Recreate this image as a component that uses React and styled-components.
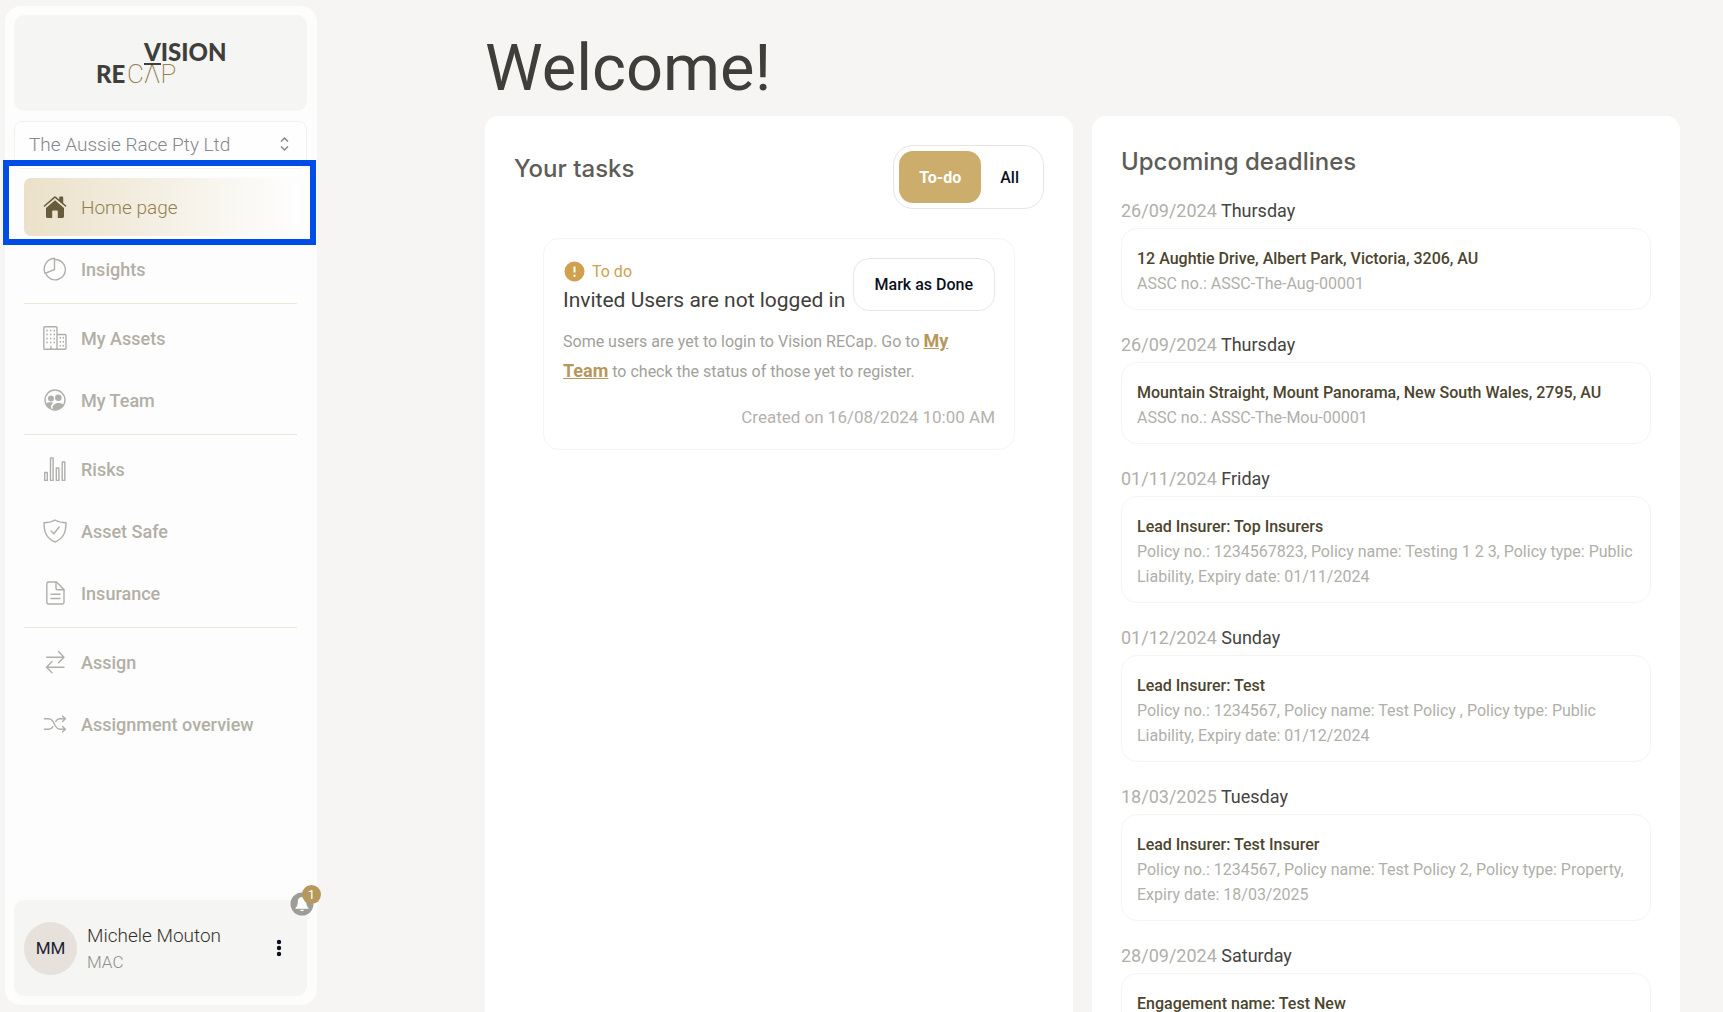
import React, { useState } from 'react';
import styled, { createGlobalStyle } from 'styled-components';

const GlobalStyle = createGlobalStyle`
  *, *::before, *::after {
    box-sizing: border-box;
  }
  body {
    margin: 0;
    background: #f6f5f3;
    color: #3f3e3b;
    font-family: Roboto, 'Liberation Sans', sans-serif;
  }
  h1, h2, h3, p {
    margin: 0;
  }
  button, select {
    font-family: inherit;
  }
`;

const Shell = styled.div`
  display: flex;
  height: 100vh;
  overflow: hidden;
`;

const Sidebar = styled.aside`
  display: flex;
  flex-direction: column;
  flex: none;
  width: 312px;
  height: calc(100vh - 13px);
  margin: 6px 0 0 5px;
  padding: 9px;
  padding-right: 10px;
  border-radius: 16px;
  background: #fdfdfd;
`;

const LogoBox = styled.div`
  display: flex;
  flex: none;
  justify-content: center;
  height: 96px;
  border-radius: 10px;
  background: #f5f5f3;
`;

const OrgPicker = styled.label`
  display: flex;
  flex: none;
  align-items: center;
  height: 48px;
  margin-top: 10px;
  padding: 0 15px 2px 14px;
  border: 1px solid #f3f2f0;
  border-radius: 8px;
  background: #fefefe;
  color: #85868e;
  select {
    appearance: none;
    flex: 1;
    min-width: 0;
    padding: 0;
    border: 0;
    outline: 0;
    background: none;
    color: inherit;
    font-size: 19px;
    font-weight: 300;
  }
`;

const Nav = styled.nav`
  display: flex;
  flex-direction: column;
  gap: 4px;
  margin-top: 9px;
  padding: 0 10px;
`;

const NavLink = styled.a`
  position: relative;
  display: flex;
  align-items: center;
  gap: 14px;
  height: 58px;
  padding-left: 19px;
  border-radius: 7px;
  background: ${(props) =>
    props.$active
      ? 'linear-gradient(90deg, #ebe1ca 0%, #f3eee1 45%, #fefefe 100%)'
      : 'none'};
  color: ${(props) => (props.$active ? '#91804f' : '#b2afa5')};
  font-size: ${(props) => (props.$active ? '19px' : '18px')};
  font-weight: ${(props) => (props.$active ? 300 : 500)};
  text-decoration: none;
  svg {
    flex: none;
    color: ${(props) => (props.$active ? '#685c3b' : '#b0afa9')};
  }
`;

const Highlight = styled.span`
  position: absolute;
  inset: -18px -19px -9px -21px;
  border: 6px solid #004ce6;
  pointer-events: none;
`;

const Divider = styled.hr`
  width: 100%;
  height: 1px;
  margin: 1px 0;
  border: 0;
  background: #eee6d2;
`;

const Profile = styled.div`
  position: relative;
  display: flex;
  flex: none;
  align-items: center;
  gap: 10px;
  height: 96px;
  margin-top: auto;
  padding: 0 10px;
  border-radius: 10px;
  background: #f5f5f3;
`;

const Avatar = styled.div`
  display: flex;
  flex: none;
  align-items: center;
  justify-content: center;
  width: 53px;
  height: 53px;
  border-radius: 50%;
  background: #e6e2db;
  color: #1d2233;
  font-size: 17px;
`;

const ProfileText = styled.div`
  flex: 1;
  padding-top: 2px;
  font-size: 19px;
  font-weight: 300;
  line-height: 27px;
  color: #35332a;
  p + p {
    color: #8f8f89;
    font-size: 17px;
  }
`;

const IconButton = styled.button`
  display: flex;
  padding: 8px;
  border: 0;
  background: none;
  color: #0b1020;
`;

const Bell = styled.button`
  position: absolute;
  top: -8px;
  right: -7px;
  display: flex;
  padding: 0;
  border: 0;
  background: none;
`;

const Badge = styled.span`
  position: absolute;
  top: -7px;
  right: -7px;
  width: 19px;
  height: 19px;
  border-radius: 50%;
  background: #b6975c;
  color: #fff;
  font-size: 13px;
  line-height: 19px;
  text-align: center;
`;

const Main = styled.main`
  flex: 1;
  min-width: 0;
  padding: 28px 43px 0 168px;
  overflow-y: auto;
  scrollbar-width: none;
`;

const Title = styled.h1`
  font-size: 65px;
  font-weight: 400;
  line-height: 80px;
  color: #3f3e3b;
`;

const Columns = styled.div`
  display: grid;
  grid-template-columns: 1fr 1fr;
  gap: 19px;
  margin-top: 8px;
`;

const Panel = styled.section`
  padding: 29px;
  border-radius: 14px;
  background: #fff;
`;

const PanelTitle = styled.h2`
  font-family: Inter, Roboto, sans-serif;
  font-size: 24px;
  font-weight: 500;
  line-height: 34px;
  color: #5d5c57;
`;

const PanelHeader = styled.div`
  display: flex;
  justify-content: space-between;
  margin-bottom: 29px;
  ${PanelTitle} {
    padding-top: 7px;
  }
`;

const Toggle = styled.div`
  display: flex;
  height: 64px;
  padding: 5px;
  border: 1px solid #e6e5e1;
  border-radius: 20px;
`;

const ToggleButton = styled.button`
  padding: 0 19px;
  border: 0;
  border-radius: 14px;
  background: ${(props) => (props.$on ? '#ccad6b' : 'none')};
  color: ${(props) => (props.$on ? '#fff' : '#0b1020')};
  font-size: 16px;
  font-weight: ${(props) => (props.$on ? 700 : 500)};
  &:first-child {
    min-width: 82px;
  }
`;

const TaskCard = styled.article`
  margin: 0 29px;
  padding: 19px;
  border: 1px solid #f4f4f3;
  border-radius: 16px;
`;

const TaskHeader = styled.div`
  display: flex;
  justify-content: space-between;
`;

const Status = styled.div`
  display: flex;
  align-items: center;
  gap: 7px;
  margin-bottom: 1px;
  color: #d0a04e;
  font-size: 16px;
  line-height: 27px;
  padding-left: 1px;
`;

const TaskTitle = styled.h3`
  font-size: 21px;
  font-weight: 400;
  line-height: 28px;
  white-space: nowrap;
  color: #3f3e3b;
`;

const DoneButton = styled.button`
  flex: none;
  height: 53px;
  padding: 0 21px;
  border: 1px solid #e2e8f0;
  border-radius: 16px;
  background: #fff;
  color: #0b1020;
  font-size: 16px;
  font-weight: 500;
`;

const TaskText = styled.p`
  margin-top: 12px;
  padding-right: 20px;
  color: #a2a19b;
  font-size: 16px;
  line-height: 29px;
  a {
    color: #b6975c;
    font-size: 18px;
    font-weight: 700;
  }
`;

const Created = styled.p`
  margin-top: 19px;
  color: #b3b2ad;
  font-size: 17px;
  line-height: 25px;
  text-align: right;
`;

const Deadline = styled.article`
  margin-top: 22px;
  ${PanelTitle} + & {
    margin-top: 19px;
  }
`;

const DeadlineDate = styled.h3`
  font-size: 18px;
  font-weight: 400;
  line-height: 25px;
  color: #45443f;
  time {
    color: #b0afa9;
  }
`;

const DeadlineCard = styled.div`
  margin-top: 5px;
  padding: 17px 15px 13px;
  border: 1px solid #f4f4f3;
  border-radius: 16px;
  color: #b0afa9;
  font-size: 16px;
  line-height: 25px;
  strong {
    display: block;
    color: #4c452e;
    font-weight: 500;
  }
`;

function Logo() {
  return (
    <svg width="130" height="96" viewBox="0 0 130 96" role="img" aria-label="Vision RECap">
      <g fontFamily="Lato, sans-serif" fontSize="24">
        <text x="48" y="46" fontWeight="900" fill="#3f3e3b">VISION</text>
        <text x="0" y="68" fontWeight="900" fill="#3f3e3b">RE</text>
        <text x="31" y="68" fontFamily="Roboto, sans-serif" fontSize="26" fontWeight="200" fill="#91804f">
          CΛP
        </text>
      </g>
      <rect x="48" y="48" width="17" height="2" fill="#3f3e3b" />
    </svg>
  );
}

function Icon({ children, size = 24 }) {
  return (
    <svg
      width={size}
      height={size}
      viewBox="0 0 24 24"
      fill="none"
      stroke="currentColor"
      strokeWidth="1.4"
      strokeLinecap="round"
      strokeLinejoin="round"
      aria-hidden="true"
    >
      {children}
    </svg>
  );
}

const icons = {
  home: (
    <g fill="currentColor" stroke="none">
      <path d="M12 5.2 21 13v8.6c0 .8-.6 1.4-1.4 1.4h-4.8v-6.6c0-.5-.3-.8-.8-.8h-4c-.5 0-.8.3-.8.8V23H4.4c-.8 0-1.4-.6-1.4-1.4V13z" />
      <path d="M11 1.7a1.5 1.5 0 0 1 2 0l3.2 2.8V2.3c0-.5.3-.8.8-.8h2.4c.5 0 .8.3.8.8v5.7l3 2.6c.4.4.1 1-.3 1.1-.3.1-.6 0-.8-.2L12 2.9l-10.1 8.6c-.3.3-.8.2-1-.1-.3-.3-.2-.7.1-1z" />
    </g>
  ),
  insights: (
    <>
      <path d="M11.5 1.2v11.3L2 16.3A11 11 0 0 1 11.5 1.2z" />
      <path d="M11.5 2.5a10.2 10.2 0 1 1-8.8 14" />
    </>
  ),
  assets: (
    <>
      <path d="M2 .8h11c.6 0 1 .4 1 1V23.3H1.8a1 1 0 0 1-1-1V1.8c0-.6.5-1 1.2-1zM14 8.5h8c.6 0 1 .4 1 1v12.8a1 1 0 0 1-1 1h-8M8 20.5v2.8" />
      <path
        d="M4 4.2v16M7.7 4.2v14M11.3 4.2v16M17.3 11.5v9M20.3 11.5v9"
        strokeDasharray="0.5 3.5"
        strokeWidth="1.5"
      />
    </>
  ),
  team: (
    <>
      <circle cx="12" cy="12" r="10" />
      <g fill="currentColor" stroke="none">
        <circle cx="8" cy="10.5" r="3" />
        <circle cx="15.3" cy="9.7" r="3.3" />
        <path d="M3 15.5c2-1.3 5-1.6 7.3-.8-1.5 1.1-2.3 2.5-2.3 4.3v2C5.5 20.2 3.6 18 3 15.5zM9.6 19.5c0-3 3.3-4.5 5.9-4.5 2 0 4.2.6 5.3 1.5-1.6 3.7-5.6 6-9.8 5.3l-1.4-.3z" />
      </g>
    </>
  ),
  risks: (
    <path d="M1.7 15.5h2.6v8H1.7zM7.5 1h2.6v22.5H7.5zM13.3 11h2.6v12.5h-2.6zM19.2 5h2.6v18.5h-2.6z" />
  ),
  safe: (
    <>
      <path d="M12 1c3.3 2 7 2.7 11 2.7 0 9-2 15.3-11 19.3C3 19 1 12.7 1 3.7 5 3.7 8.7 3 12 1z" />
      <path d="m8 12 2.8 2.8L16.2 8" />
    </>
  ),
  insurance: (
    <>
      <path d="M5.5 1h8l7.5 7.5v12.8c0 1-.7 1.7-1.7 1.7H5.5c-1 0-1.7-.7-1.7-1.7V2.7c0-1 .7-1.7 1.7-1.7z" />
      <path d="M13 1.2v6c0 .8.5 1.5 1.5 1.5h6.3M8 13.2h9M8 17.5h9" />
    </>
  ),
  assign: <path d="M3.5 7.2h17.3M15.5 1.5l5.5 5.7-5.5 5.6M21 17.2H3.6M9 11.5l-5.5 5.7L9 22.8" />,
  overview: (
    <path d="M1.5 6.7h4.2c2 0 3.2 1 4.2 2.6l2.8 5.2c1 1.7 2.2 2.7 4.2 2.7h5.5M1.5 17.2h4.2c2 0 3.2-.9 4.2-2.6M12.7 9.3c1-1.7 2.2-2.6 4.2-2.6h5.5M19.5 4l2.9 2.7-2.9 2.7M19.5 14.5l2.9 2.7-2.9 2.7" />
  ),
};

const navGroups = [
  [
    { label: 'Home page', icon: 'home', active: true },
    { label: 'Insights', icon: 'insights' },
  ],
  [
    { label: 'My Assets', icon: 'assets' },
    { label: 'My Team', icon: 'team' },
  ],
  [
    { label: 'Risks', icon: 'risks' },
    { label: 'Asset Safe', icon: 'safe' },
    { label: 'Insurance', icon: 'insurance' },
  ],
  [
    { label: 'Assign', icon: 'assign' },
    { label: 'Assignment overview', icon: 'overview' },
  ],
];

const deadlines = [
  {
    date: '26/09/2024',
    day: 'Thursday',
    title: '12 Aughtie Drive, Albert Park, Victoria, 3206, AU',
    detail: 'ASSC no.: ASSC-The-Aug-00001',
  },
  {
    date: '26/09/2024',
    day: 'Thursday',
    title: 'Mountain Straight, Mount Panorama, New South Wales, 2795, AU',
    detail: 'ASSC no.: ASSC-The-Mou-00001',
  },
  {
    date: '01/11/2024',
    day: 'Friday',
    title: 'Lead Insurer: Top Insurers',
    detail:
      'Policy no.: 1234567823, Policy name: Testing 1 2 3, Policy type: Public Liability, Expiry date: 01/11/2024',
  },
  {
    date: '01/12/2024',
    day: 'Sunday',
    title: 'Lead Insurer: Test',
    detail:
      'Policy no.: 1234567, Policy name: Test Policy , Policy type: Public Liability, Expiry date: 01/12/2024',
  },
  {
    date: '18/03/2025',
    day: 'Tuesday',
    title: 'Lead Insurer: Test Insurer',
    detail:
      'Policy no.: 1234567, Policy name: Test Policy 2, Policy type: Property, Expiry date: 18/03/2025',
  },
  {
    date: '28/09/2024',
    day: 'Saturday',
    title: 'Engagement name: Test New',
  },
];

function SideNav() {
  return (
    <Nav>
      {navGroups.map((group, index) => (
        <React.Fragment key={index}>
          {index > 0 && <Divider />}
          {group.map((item) => (
            <NavLink key={item.label} href="#" $active={item.active}>
              <Icon>{icons[item.icon]}</Icon>
              {item.label}
              {item.active && <Highlight />}
            </NavLink>
          ))}
        </React.Fragment>
      ))}
    </Nav>
  );
}

function UserProfile() {
  return (
    <Profile>
      <Avatar>MM</Avatar>
      <ProfileText>
        <p>Michele Mouton</p>
        <p>MAC</p>
      </ProfileText>
      <IconButton aria-label="Account menu">
        <svg width="20" height="20" viewBox="0 0 20 20" fill="currentColor">
          <circle cx="10" cy="4" r="2.2" />
          <circle cx="10" cy="10" r="2.2" />
          <circle cx="10" cy="16" r="2.2" />
        </svg>
      </IconButton>
      <Bell aria-label="Notifications">
        <svg width="24" height="24" viewBox="0 0 24 24">
          <circle cx="12" cy="12" r="11.5" fill="#9d9c96" />
          <path
            d="M12 5c2.6 0 4.2 1.9 4.2 4.4 0 3.3.7 4.7 2.3 6.6v.8h-13V16c1.6-1.9 2.3-3.3 2.3-6.6C7.8 6.9 9.4 5 12 5zM9.8 17.8h4.4c-.3.9-1.2 1.4-2.2 1.4s-1.9-.5-2.2-1.4z"
            fill="#fff"
          />
        </svg>
        <Badge>1</Badge>
      </Bell>
    </Profile>
  );
}

function Tasks() {
  const [filter, setFilter] = useState('To-do');

  return (
    <Panel>
      <PanelHeader>
        <PanelTitle>Your tasks</PanelTitle>
        <Toggle>
          {['To-do', 'All'].map((name) => (
            <ToggleButton key={name} $on={filter === name} onClick={() => setFilter(name)}>
              {name}
            </ToggleButton>
          ))}
        </Toggle>
      </PanelHeader>
      <TaskCard>
        <TaskHeader>
          <div>
            <Status>
              <svg width="21" height="21" viewBox="0 0 21 21" aria-hidden="true">
                <circle cx="10.5" cy="10.5" r="10" fill="#d0a04e" />
                <path d="M10.5 5.5v6" stroke="#fff" strokeWidth="2" />
                <circle cx="10.5" cy="14.7" r="1.2" fill="#fff" />
              </svg>
              To do
            </Status>
            <TaskTitle>Invited Users are not logged in</TaskTitle>
          </div>
          <DoneButton>Mark as Done</DoneButton>
        </TaskHeader>
        <TaskText>
          Some users are yet to login to Vision RECap. Go to <a href="#">My Team</a> to check the
          status of those yet to register.
        </TaskText>
        <Created>Created on 16/08/2024 10:00 AM</Created>
      </TaskCard>
    </Panel>
  );
}

function Deadlines() {
  return (
    <Panel>
      <PanelTitle>Upcoming deadlines</PanelTitle>
      {deadlines.map((item) => (
        <Deadline key={item.title}>
          <DeadlineDate>
            <time>{item.date}</time> {item.day}
          </DeadlineDate>
          <DeadlineCard>
            <strong>{item.title}</strong>
            {item.detail}
          </DeadlineCard>
        </Deadline>
      ))}
    </Panel>
  );
}

export default function App() {
  return (
    <>
      <GlobalStyle />
      <Shell>
        <Sidebar>
          <LogoBox>
            <Logo />
          </LogoBox>
          <OrgPicker>
            <select aria-label="Organisation">
              <option>The Aussie Race Pty Ltd</option>
            </select>
            <svg width="13" height="16" viewBox="0 0 13 16" fill="none" stroke="currentColor" strokeWidth="1.5">
              <path d="M3 5.5 6.5 2 10 5.5M3 10.5 6.5 14l3.5-3.5" />
            </svg>
          </OrgPicker>
          <SideNav />
          <UserProfile />
        </Sidebar>
        <Main>
          <Title>Welcome!</Title>
          <Columns>
            <Tasks />
            <Deadlines />
          </Columns>
        </Main>
      </Shell>
    </>
  );
}
